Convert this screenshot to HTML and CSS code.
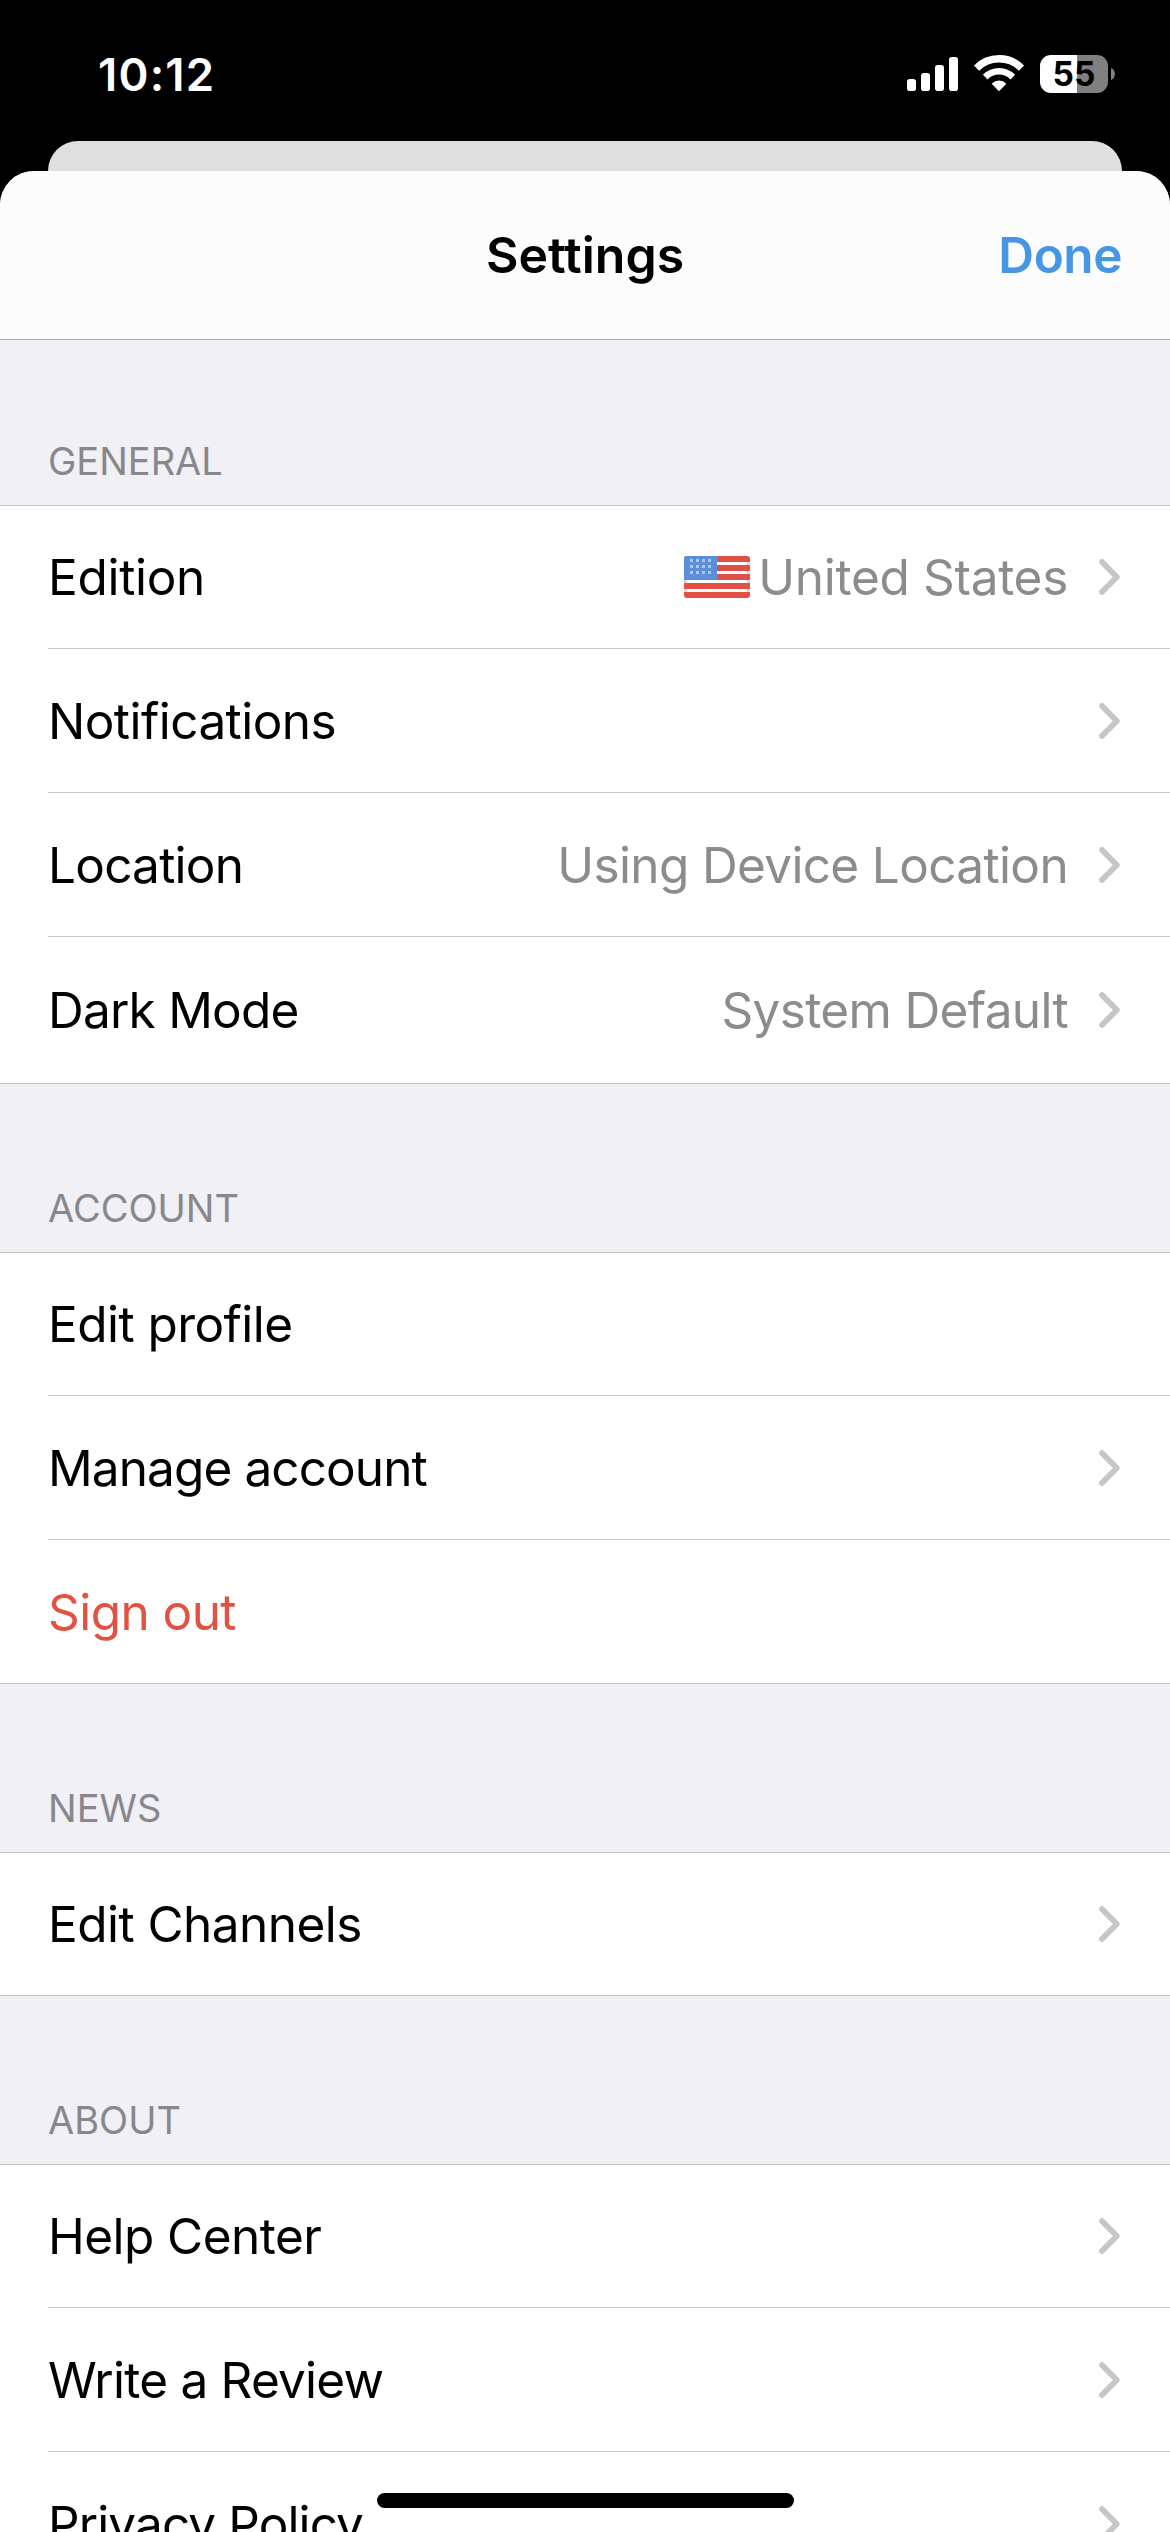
FILE: index.html
```html
<!DOCTYPE html>
<html lang="en">
<head>
<meta charset="utf-8">
<title>Settings</title>
<link rel="stylesheet" href="styles.css">
</head>
<body>
<svg class="defs" aria-hidden="true">
  <symbol id="chevron" viewBox="0 0 21 36">
    <path d="M3 3 L17.8 18 L3 33" fill="none" stroke="#c6c6c6" stroke-width="5.8" stroke-linecap="round" stroke-linejoin="round"/>
  </symbol>
</svg>
<div class="screen">
  <header class="status">
    <span class="time">10:12</span>
    <div class="indicators">
      <svg class="signal" width="51" height="34" viewBox="0 0 51 34" fill="#fff">
        <rect x="0" y="22" width="9" height="12" rx="2.8"/>
        <rect x="14" y="16" width="9" height="18" rx="2.8"/>
        <rect x="28" y="8" width="9" height="26" rx="2.8"/>
        <rect x="42" y="0" width="9" height="34" rx="2.8"/>
      </svg>
      <svg class="wifi" width="50" height="36" viewBox="0 0 50 36">
        <clipPath id="wedge"><path d="M25 36.3 L-2 8.5 V-5 H52 V8.5 Z"/></clipPath>
        <g clip-path="url(#wedge)" fill="none" stroke="#fff">
          <circle cx="25" cy="35.5" r="31.7" stroke-width="7.4"/>
          <circle cx="25" cy="35.5" r="19.2" stroke-width="6.6"/>
          <circle cx="25" cy="35.5" r="10" fill="#fff" stroke="none"/>
        </g>
      </svg>
      <div class="battery">
        <span class="cell">55</span>
        <svg width="4" height="12" viewBox="0 0 4 12"><path d="M0 0 C5.3 2 5.3 10 0 12 Z" fill="#808080"/></svg>
      </div>
    </div>
  </header>
  <div class="behind"></div>
  <main class="sheet">
    <nav class="nav">
      <h1 class="title">Settings</h1>
      <a class="done">Done</a>
    </nav>

    <h2 class="heading heading-first">GENERAL</h2>
    <section class="group">
      <div class="row">
        <span class="label loose">Edition</span>
        <span class="value loose">
          <svg class="flag" width="66" height="42" viewBox="0 0 66 42">
            <clipPath id="flagShape"><rect width="66" height="42" rx="3"/></clipPath>
            <g clip-path="url(#flagShape)">
              <rect width="66" height="42" fill="#e24f45"/>
              <path d="M0 6h66v3H0zM0 15h66v3H0zM0 24h66v3H0zM0 33h66v3H0z" fill="#e9d3d3"/>
              <path d="M3 6h60v3H3zM3 15h60v3H3zM3 24h60v3H3zM3 33h60v3H3z" fill="#fff"/>
              <rect width="33" height="24" fill="#5b8edb"/>
              <path d="M6 3h3v3h-3zM12 3h3v3h-3zM18 3h3v3h-3zM24 3h3v3h-3zM6 9h3v3h-3zM12 9h3v3h-3zM18 9h3v3h-3zM24 9h3v3h-3zM6 15h3v3h-3zM12 15h3v3h-3zM18 15h3v3h-3zM24 15h3v3h-3z" fill="#a9c8f7"/>
            </g>
          </svg>
          United States
        </span>
        <svg class="chevron"><use href="#chevron"/></svg>
      </div>
      <div class="row">
        <span class="label">Notifications</span>
        <svg class="chevron"><use href="#chevron"/></svg>
      </div>
      <div class="row">
        <span class="label snug">Location</span>
        <span class="value">Using Device Location</span>
        <svg class="chevron"><use href="#chevron"/></svg>
      </div>
      <div class="row row-tall">
        <span class="label snug">Dark Mode</span>
        <span class="value">System Default</span>
        <svg class="chevron"><use href="#chevron"/></svg>
      </div>
    </section>

    <h2 class="heading">ACCOUNT</h2>
    <section class="group">
      <div class="row"><span class="label">Edit profile</span></div>
      <div class="row">
        <span class="label tight">Manage account</span>
        <svg class="chevron"><use href="#chevron"/></svg>
      </div>
      <div class="row"><span class="label danger">Sign out</span></div>
    </section>

    <h2 class="heading">NEWS</h2>
    <section class="group">
      <div class="row">
        <span class="label">Edit Channels</span>
        <svg class="chevron"><use href="#chevron"/></svg>
      </div>
    </section>

    <h2 class="heading">ABOUT</h2>
    <section class="group">
      <div class="row">
        <span class="label">Help Center</span>
        <svg class="chevron"><use href="#chevron"/></svg>
      </div>
      <div class="row">
        <span class="label snug">Write a Review</span>
        <svg class="chevron"><use href="#chevron"/></svg>
      </div>
      <div class="row">
        <span class="label tight">Privacy Policy</span>
        <svg class="chevron"><use href="#chevron"/></svg>
      </div>
    </section>
  </main>
  <div class="home-indicator"></div>
</div>
</body>
</html>
```
FILE: styles.css
```css
* {
  box-sizing: border-box;
  margin: 0;
}

body {
  background: #000;
  font-family: Inter, "Liberation Sans", sans-serif;
  color: #000;
}

.defs {
  display: none;
}

.screen {
  position: relative;
  display: flex;
  flex-direction: column;
  width: 1170px;
  height: 2532px;
  overflow: hidden;
  background: #000;
}

/* Status bar */
.status {
  display: flex;
  flex: none;
  align-items: center;
  justify-content: space-between;
  height: 141px;
  padding: 7px 55px 0 98px;
}

.time {
  color: #fff;
  font-size: 45.5px;
  font-weight: 600;
  letter-spacing: 1.2px;
}

.indicators {
  display: flex;
  align-items: center;
}

.wifi {
  margin: 0 16px;
  margin-top: -2px;
}

.battery {
  display: flex;
  align-items: center;
  gap: 3px;
}

.cell {
  width: 68px;
  height: 38px;
  border-radius: 11px;
  background: linear-gradient(to right, #fff 37px, #808080 37px);
  font-size: 33.5px;
  font-weight: 650;
  line-height: 39px;
  text-align: center;
}

/* Stacked sheets */
.behind {
  flex: none;
  height: 30px;
  margin: 0 48px;
  border-radius: 30px 30px 0 0;
  background: #dfdfdf;
}

.sheet {
  flex: 1;
  min-height: 0;
  overflow: hidden;
  border-radius: 34px 34px 0 0;
  background: #f0f0f5;
}

.nav {
  display: grid;
  grid-template-columns: 1fr auto 1fr;
  align-items: center;
  height: 169px;
  padding: 0 48px;
  border-bottom: 1px solid #a9a9ad;
  background: #fcfcfd;
}

.title {
  grid-column: 2;
  font-size: 50px;
  font-weight: 600;
}

.done {
  justify-self: end;
  color: #4596e4;
  font-size: 49.5px;
  font-weight: 600;
  letter-spacing: -0.45px;
}

/* Grouped list */
.heading {
  display: flex;
  align-items: flex-end;
  height: 168px;
  padding: 0 48px 21px;
  color: #88888c;
  font-size: 38px;
  font-weight: 400;
  line-height: 46px;
}

.heading-first {
  height: 165px;
}

.group {
  border-top: 1px solid #c6c6c8;
  border-bottom: 1px solid #c6c6c8;
  background: #fff;
}

.row {
  display: flex;
  align-items: center;
  height: 144px;
  margin-left: 48px;
  padding-right: 50px;
  border-bottom: 1px solid #c6c6c8;
  font-size: 49.5px;
  letter-spacing: -0.55px;
}

.row:first-child {
  height: 143px;
}

.row:last-child {
  height: 143px;
  border-bottom: 0;
}

.row:only-child {
  height: 142px;
}

.row.row-tall {
  height: 146px;
}

.label {
  margin-right: auto;
  white-space: nowrap;
}

.value {
  display: flex;
  align-items: center;
  gap: 8px;
  margin-right: 31px;
  color: #8c8c8c;
  letter-spacing: -0.65px;
  white-space: nowrap;
}

.loose {
  letter-spacing: -0.3px;
}

.snug {
  letter-spacing: -0.77px;
}

.tight {
  letter-spacing: -0.9px;
}

.danger {
  color: #e25141;
}

.chevron {
  flex: none;
  width: 21px;
  height: 36px;
}

/* Floats over the list */
.home-indicator {
  position: absolute;
  bottom: 24px;
  left: 377px;
  width: 417px;
  height: 15px;
  border-radius: 8px;
  background: #000;
}
```
